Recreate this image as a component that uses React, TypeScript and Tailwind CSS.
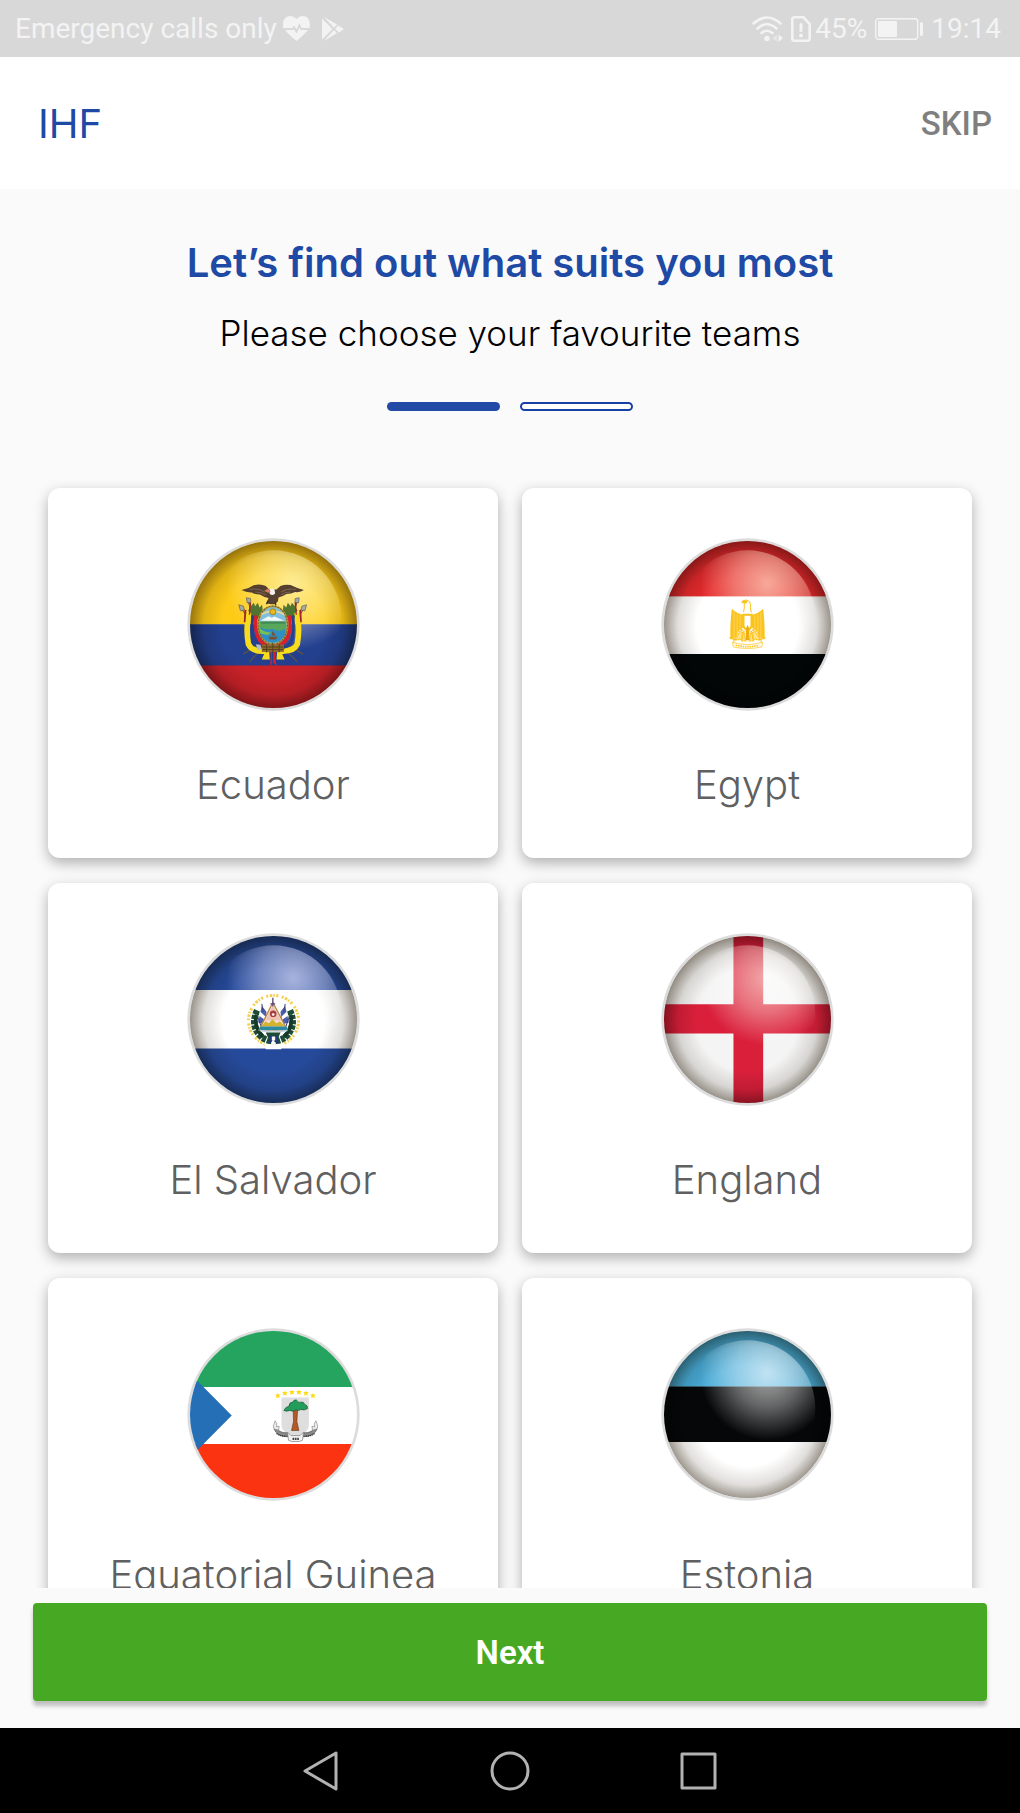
import React, { useState } from "react";

type FlagProps = {
  id: string;
  glossy?: boolean;
  gloss?: string;
  children: React.ReactNode;
  emblem?: React.ReactNode;
};

/* Round badge, drawn on a 518-unit square with its centre at (259, 259). */
function Badge({ id, glossy = true, gloss = "#fff", children, emblem }: FlagProps) {
  return (
    <svg viewBox="0 0 518 518" className="isolate size-[173px]" aria-hidden="true">
      <defs>
        <clipPath id={`${id}-clip`}>
          <circle cx="259" cy="259" r="250" />
        </clipPath>
        <radialGradient id={`${id}-shade`} gradientUnits="userSpaceOnUse" cx="259" cy="262" r="254">
          <stop offset="0.6" stopColor="#2a1c08" stopOpacity="0" />
          <stop offset="0.82" stopColor="#2a1c08" stopOpacity="0.14" />
          <stop offset="1" stopColor="#2a1c08" stopOpacity="0.5" />
        </radialGradient>
        <radialGradient id={`${id}-gloss`} gradientUnits="userSpaceOnUse" cx="318" cy="136" r="200">
          <stop offset="0" stopColor={gloss} stopOpacity="0.66" />
          <stop offset="0.5" stopColor={gloss} stopOpacity="0.38" />
          <stop offset="0.8" stopColor={gloss} stopOpacity="0.15" />
          <stop offset="1" stopColor={gloss} stopOpacity="0" />
        </radialGradient>
      </defs>
      <circle cx="259" cy="259" r="258" fill="#dcdcdc" />
      <g clipPath={`url(#${id}-clip)`}>
        {children}
        {glossy && (
          <>
            <circle className="mix-blend-multiply" cx="259" cy="259" r="251" fill={`url(#${id}-shade)`} />
            <circle className="mix-blend-screen" cx="259" cy="240" r="203" fill={`url(#${id}-gloss)`} />
          </>
        )}
        {emblem}
      </g>
    </svg>
  );
}

function EcuadorEmblem() {
  return (
    <g transform="translate(-52 -54)">
      {/* spears */}
      <g stroke="#6b5638" strokeWidth="3">
        <path d="M209 256 L232 290 M231 234 L248 280 M408 256 L386 290 M386 234 L370 280 M262 375 L220 402 M275 385 L240 424 M355 375 L400 402 M343 385 L382 424" />
      </g>
      <g fill="#a9a9a4" stroke="#5c5c58" strokeWidth="2">
        <path d="M207 254 l14 4 3 12 -12 2z M230 233 l12 2 1 12 -11 1z M410 254 l-14 4 -3 12 12 2z M388 233 l-12 2 -1 12 11 1z" />
      </g>
      {/* laurel */}
      <g fill="#4f7430">
        <path d="M243 258 l9 -10 4 10 8 -10 5 14 8 -8 2 20 -10 20 -18 6 -12 -12 6 -8 -10 -8z" />
        <path d="M375 258 l-9 -10 -4 10 -8 -10 -5 14 -8 -8 -2 20 10 20 18 6 12 -12 -6 -8 10 -8z" />
      </g>
      {/* draped flags */}
      <g fill="none">
        <path d="M236 280 Q228 330 236 372 Q246 396 290 392" stroke="#f6dc1c" strokeWidth="17" />
        <path d="M382 280 Q390 330 382 372 Q372 396 328 392" stroke="#f6dc1c" strokeWidth="17" />
        <path d="M249 286 Q244 336 254 364 Q264 384 292 382" stroke="#24408e" strokeWidth="9" />
        <path d="M369 286 Q374 336 364 364 Q354 384 326 382" stroke="#24408e" strokeWidth="9" />
        <path d="M259 286 Q254 330 266 354 Q276 374 296 374" stroke="#d9202b" strokeWidth="11" />
        <path d="M359 286 Q364 330 352 354 Q342 374 322 374" stroke="#d9202b" strokeWidth="11" />
      </g>
      <path d="M224 268 l6 2 -3 36 -5 0z M239 246 l5 2 -3 36 -4 0z M394 268 l-6 2 3 36 5 0z M379 246 l-5 2 3 36 4 0z" fill="#a3262c" />
      <path d="M284 398 l14 -4 2 24 -24 0z M322 394 l14 4 8 20 -24 0z" fill="#f6dc1c" />
      <path d="M302 392 h16 l-2 18 4 28 -11 -12 -8 12 2 -28z" fill="#d9202b" />
      <path d="M308 394 v40" stroke="#24408e" strokeWidth="4" />
      {/* oval shield */}
      <ellipse cx="309" cy="315" rx="47" ry="60" fill="#b5953c" />
      <ellipse cx="309" cy="315" rx="41" ry="54" fill="#7fbfe0" />
      <path d="M270 303 h78 l2 14 -3 26 -77 0 -2 -24z" fill="#58a85b" />
      <path d="M272 302 L296 288 l10 5 8 -4 30 13z" fill="#f4f7f8" />
      <path d="M274 306 h71 v4 h-71z" fill="#3b7e56" />
      <path d="M272 322 q18 10 36 4 q20 12 38 0 v18 q-14 24 -37 24 q-26 -2 -37 -26z" fill="#2f8fc0" />
      <path d="M270 324 q14 14 34 12 l-8 8 q-18 0 -25 -6z" fill="#79bf55" />
      <path d="M296 350 h27 l-5 8 h-18z M308 332 l10 14 h-12z" fill="#7c4e32" />
      <path d="M272 284 q37 -22 74 0" fill="none" stroke="#e2d89b" strokeWidth="5" />
      <circle cx="309" cy="275" r="9" fill="#e6b91e" stroke="#8b6a16" strokeWidth="2" />
      <ellipse cx="309" cy="315" rx="44" ry="57" fill="none" stroke="#705c28" strokeWidth="3" strokeDasharray="5 4" />
      {/* fasces */}
      <path d="M276 373 h66 v22 h-66z" fill="#8f6a2c" />
      <path d="M278 380 h62 M278 388 h62 M290 372 v24 M328 372 v24 M309 368 v30" stroke="#57401c" strokeWidth="3" />
      <path d="M258 372 l14 2 4 12 -12 4z" fill="#b7bcc0" />
      {/* condor */}
      <path d="M215 210 Q236 206 250 196 Q272 190 288 198 L298 208 L320 208 L332 198 Q346 192 362 195 Q384 206 402 210 Q392 218 376 216 Q364 222 350 222 Q338 230 326 232 L324 244 L314 252 L304 252 L290 250 L296 234 Q280 230 270 223 Q254 223 246 217 Q230 218 215 210Z" fill="#55402f" />
      <path d="M240 208 q26 -4 46 8 M378 208 q-26 -4 -44 8 M256 216 q18 0 32 8 M362 216 q-16 0 -28 8" fill="none" stroke="#7a6150" strokeWidth="3" />
      <path d="M298 208 q8 -6 16 0 l2 12 q-8 8 -16 2z" fill="#f2efec" />
      <path d="M284 212 q8 -8 16 -4 l2 8 -8 2z" fill="#d47d67" />
      <path d="M294 242 l-4 10 M316 246 l2 10" stroke="#3c2b22" strokeWidth="4" />
    </g>
  );
}

function EgyptEmblem() {
  return (
    <g transform="translate(-64 -54)">
      <path d="M276 266 Q270 318 272 358 L288 352 Q294 330 310 322 L314 284 Q292 282 276 266Z" fill="#fcc31a" />
      <path d="M370 266 Q376 318 374 358 L358 352 Q352 330 336 322 L332 284 Q354 282 370 266Z" fill="#fcc31a" />
      <path d="M283 276 v78 M292 282 v58 M301 284 v42 M363 276 v78 M354 282 v58 M345 284 v42" stroke="#fff" strokeOpacity="0.45" strokeWidth="2" />
      <path d="M311 276 Q315 264 313 248 Q309 246 306 247 Q310 239 320 240 Q332 242 332 256 Q330 270 336 276" fill="#fff" stroke="#fcc31a" strokeWidth="3" />
      <path d="M308 241 h16 l-4 9 h-8z" fill="#fcc31a" />
      <path d="M311 284 h24 v34 q-4 10 -12 12 q-8 -2 -12 -12z" fill="#fff" stroke="#fcc31a" strokeWidth="6" />
      <path d="M306 326 L284 358 h24z M340 326 L362 358 h-24z M312 332 l-8 30 h14z M334 332 l8 30 h-14z" fill="#fde28a" stroke="#fcc31a" strokeWidth="4" strokeDasharray="6 2" />
      <path d="M318 326 l5 -12 6 12 -1 34 h-10z" fill="#eeae12" />
      <path d="M268 352 l22 8 M378 352 l-22 8 M282 354 v22 M364 354 v22" stroke="#fcc31a" strokeWidth="3" />
      <path d="M278 366 Q323 380 368 366 L366 380 Q323 390 280 380Z" fill="#fffaf0" stroke="#fcc31a" strokeWidth="2" />
      <path d="M288 375 Q323 384 358 375" fill="none" stroke="#fcc31a" strokeWidth="5" strokeDasharray="4 3" />
    </g>
  );
}

function ElSalvadorEmblem() {
  return (
    <g transform="translate(-52 -54)">
      <circle cx="311" cy="316" r="75" fill="none" stroke="#f3cf52" strokeWidth="9" strokeDasharray="5 4 7 3 4 4 6 9" pathLength="420" />
      <path d="M282 380 Q311 396 340 380 L334 402 H288Z" fill="#fff" />
      {/* laurel wreath */}
      <path d="M262 286 Q242 330 270 360 Q288 378 304 376" fill="none" stroke="#1d4c34" strokeWidth="20" strokeDasharray="12 3" />
      <path d="M360 286 Q380 330 352 360 Q334 378 318 376" fill="none" stroke="#1d4c34" strokeWidth="20" strokeDasharray="12 3" />
      <path d="M260 298 Q250 334 280 366 M362 298 Q372 334 342 366" fill="none" stroke="#163a29" strokeWidth="11" />
      {/* flags */}
      <path d="M276 272 l14 18 -3 38 -22 -6z M346 272 l-14 18 3 38 22 -6z" fill="#4a5fae" />
      <path d="M270 288 l17 16 -2 10 -17 -12z M352 288 l-17 16 2 10 17 -12z" fill="#fff" />
      <path d="M276 266 l4 24 M346 266 l-4 24 M262 300 l12 34 M360 300 l-12 34" stroke="#3b4675" strokeWidth="3" />
      {/* triangle */}
      <path d="M309 262 L268 344 H352Z" fill="#f6e6da" stroke="#b9854a" strokeWidth="4" />
      <path d="M309 272 L285 316 H335Z" fill="#efc4b5" />
      <path d="M309 248 v26 M302 266 h14" stroke="#5a4b7c" strokeWidth="4" />
      <circle cx="310" cy="296" r="10" fill="#a8403f" />
      <circle cx="310" cy="298" r="4" fill="#fff" />
      <path d="M275 334 l12 -16 10 6 11 -12 12 12 10 -6 16 16z" fill="#d3b32f" />
      <path d="M272 334 h78 l5 11 H266z" fill="#2e8aa3" />
      <path d="M270 346 q40 8 82 0" fill="none" stroke="#c9d6dd" strokeWidth="4" />
      <path d="M288 352 h44 l-6 14 h-32z" fill="#1d4c34" />
      <path d="M296 362 h30 l-4 14 8 8 -14 -2 -6 -8 -6 8 -12 2 8 -8z" fill="#27397d" />
      <path d="M306 364 h10 v12 h-10z" fill="#fff" />
    </g>
  );
}

function GuineaEmblem() {
  return (
    <g transform="translate(-52 -54)">
      {[[324, 256], [345, 249], [366, 246], [387, 246], [408, 249], [429, 256]].map(([x, y]) => (
        <path
          key={x}
          d={`M${x} ${y - 8} l2 5 6 0 -4 5 2 6 -6 -3 -6 3 2 -6 -4 -5 6 0z`}
          fill="#fbdc12"
        />
      ))}
      <path d="M335 262 h82 v84 q0 22 -41 34 q-41 -12 -41 -34z" fill="#dedede" />
      <path d="M370 300 h13 l-2 34 6 27 h-22 l6 -27z" fill="#b35a27" stroke="#6f3b1d" strokeWidth="2" />
      <path d="M342 301 Q346 291 357 288 Q358 276 370 275 Q372 267 380 270 Q386 279 393 276 Q401 274 404 282 Q414 286 413 295 Q404 302 392 298 Q386 304 380 299 Q370 306 360 301 Q350 305 342 301Z" fill="#239e5a" stroke="#1d4f36" strokeWidth="2" />
      <path d="M313 358 Q322 378 354 380 L352 368 Q330 368 322 356Z M441 358 Q432 378 400 380 L402 368 Q424 368 432 356Z" fill="#8b8b8b" stroke="#555" strokeWidth="2" />
      <path d="M353 366 l10 10 h28 l10 -10 -3 24 -10 4 h-22 l-10 -4z" fill="#f3f3f3" stroke="#777" strokeWidth="2" />
      <path d="M368 386 h20" stroke="#444" strokeWidth="7" strokeDasharray="5 2" />
      <path d="M316 332 q8 8 4 18 l8 -2 -2 12 -14 -4 -1 -10z M438 332 q-8 8 -4 18 l-8 -2 2 12 14 -4 1 -10z" fill="#ececec" stroke="#888" strokeWidth="2" />
      <path d="M320 370 q14 9 30 8 M434 370 q-14 9 -30 8" fill="none" stroke="#333" strokeWidth="4" strokeDasharray="4 2" />
    </g>
  );
}

const teams: { name: string; flag: React.ReactNode }[] = [
  {
    name: "Ecuador",
    flag: (
      <Badge id="ec" gloss="#fff3cf" emblem={<EcuadorEmblem />}>
        <path fill="#fdcb16" d="M0 0h518v259H0z" />
        <path fill="#23408f" d="M0 258h518v125H0z" />
        <path fill="#cb2229" d="M0 382h518v136H0z" />
      </Badge>
    ),
  },
  {
    name: "Egypt",
    flag: (
      <Badge id="eg" gloss="#ffe6c8" emblem={<EgyptEmblem />}>
        <path fill="#e62a2d" d="M0 0h518v176H0z" />
        <path fill="#fff" d="M0 175h518v173H0z" />
        <path fill="#020607" d="M0 347h518v171H0z" />
      </Badge>
    ),
  },
  {
    name: "El Salvador",
    flag: (
      <Badge id="sv" gloss="#e6e0ff" emblem={<ElSalvadorEmblem />}>
        <path fill="#264a9b" d="M0 0h518v518H0z" />
        <path fill="#fff" d="M0 171h518v175H0z" />
      </Badge>
    ),
  },
  {
    name: "England",
    flag: (
      <Badge id="en" gloss="#fff0dc">
        <path fill="#f4f4f4" d="M0 0h518v518H0z" />
        <path fill="#da1f3b" d="M217 0h89v518h-89z M0 213h518v88H0z" />
      </Badge>
    ),
  },
  {
    name: "Equatorial Guinea",
    flag: (
      <Badge id="gq" glossy={false} emblem={<GuineaEmblem />}>
        <path fill="#25a45f" d="M0 0h518v178H0z" />
        <path fill="#fff" d="M0 177h518v171H0z" />
        <path fill="#fc3310" d="M0 347h518v171H0z" />
        <path fill="#246fb5" d="M0 127L134 262L0 397z" />
      </Badge>
    ),
  },
  {
    name: "Estonia",
    flag: (
      <Badge id="ee">
        <path fill="#48abd8" d="M0 0h518v176H0z" />
        <path fill="#050708" d="M0 175h518v167H0z" />
        <path fill="#fff" d="M0 341h518v177H0z" />
      </Badge>
    ),
  },
];

function StatusBar() {
  return (
    <div className="flex h-[57px] shrink-0 items-center justify-between bg-[#d8d8d8] px-[15px] text-[28px] leading-8 text-[#f3f3f3]">
      <div className="flex items-center gap-1.5">
        <span>Emergency calls only</span>
        <svg viewBox="0 0 27 25" className="h-[25px] w-[27px]" aria-hidden="true">
          <path fill="currentColor" d="M0 12 C-1 5 2 0 7.500 0 Q11 0 13.500 3 Q16 0 19.500 0 C25 0 28 5 26.500 12 L18.500 12 L16.500 7 L13.500 13.500 L11 9.500 L9.500 12Z M2 14 H10.500 L11 13 L13.500 17.500 L16.500 11.500 L17.500 14 H25 Q22 18 13.500 25 Q5 18 2 14Z" />
        </svg>
        <svg viewBox="0 0 22 24" className="ml-1.5 h-6 w-[22px]" aria-hidden="true">
          <path fill="currentColor" d="M0 1.500 L10.500 12 L0 22.500Z M2 0 L15 7.500 L12 10.800Z M2 24 L15 16 L12 13Z M16 8.500 L22 12 L17 15.500 L13.200 12Z" />
        </svg>
      </div>
      <div className="flex items-center gap-2 pr-1">
        <svg viewBox="0 0 31 26" className="h-[26px] w-[31px]" aria-hidden="true">
          <g fill="none" stroke="currentColor" strokeWidth="2.600" strokeLinecap="round">
            <path d="M1.500 7.500 Q15 -4.500 28.500 7.500 M5.500 12.500 Q15 4 24.500 12.500 M9.500 17 Q15 12.500 20.500 17" />
          </g>
          <circle cx="15" cy="22.500" r="2.700" fill="currentColor" />
          <path fill="currentColor" d="M26.500 18.500 V26 L31 22Z" />
          <path fill="currentColor" opacity="0.5" d="M25 18.500 V26 L20 22Z" />
        </svg>
        <div className="flex items-center gap-1">
          <svg viewBox="0 0 20 26" className="h-[26px] w-5" aria-hidden="true">
            <path d="M3 1.300 H12.500 L18.700 8 V22.500 Q18.700 24.700 16.500 24.700 H3.500 Q1.300 24.700 1.300 22.500 V3.500 Q1.300 1.300 3 1.300Z" fill="none" stroke="currentColor" strokeWidth="2.600" />
            <path d="M10 8.500 V14.500" stroke="currentColor" strokeWidth="3" strokeLinecap="round" />
            <circle cx="10" cy="19.500" r="2" fill="currentColor" />
          </svg>
          <span>45%</span>
        </div>
        <svg viewBox="0 0 48 22" className="h-[22px] w-12" aria-hidden="true">
          <rect x="0.700" y="0.700" width="42" height="20.600" rx="3" fill="none" stroke="currentColor" strokeWidth="1.400" />
          <rect x="3" y="3" width="19" height="16" rx="1" fill="currentColor" />
          <rect x="45" y="4" width="3" height="14" rx="1.500" fill="currentColor" />
        </svg>
        <span>19:14</span>
      </div>
    </div>
  );
}

export default function App() {
  const [chosen, setChosen] = useState<string[]>([]);
  const toggle = (name: string) =>
    setChosen((now) => (now.includes(name) ? now.filter((n) => n !== name) : [...now, name]));

  return (
    <div className="flex h-screen flex-col bg-[#fafafa] font-[Roboto,sans-serif]">
      <StatusBar />
      <header className="flex h-33 shrink-0 items-center justify-between bg-white pt-0.5 pr-7 pl-[38px]">
        <span className="font-[Inter,sans-serif] text-[40px] leading-12 text-[#1e4aa5]">IHF</span>
        <button type="button" className="text-[33px] leading-12 font-medium text-[#7f7f7f]">
          SKIP
        </button>
      </header>

      <main className="min-h-0 flex-1 overflow-y-auto px-12 pt-12 pb-6 font-[Inter,sans-serif] [scrollbar-width:none]">
        <h1 className="text-center text-[40px] leading-13 font-semibold text-[#1e4aa5]">
          Let’s find out what suits you most
        </h1>
        <p className="mt-5 text-center text-[35px] leading-12 font-light text-black">
          Please choose your favourite teams
        </p>
        <div className="mt-[45px] flex justify-center gap-5" aria-label="Step 1 of 2" role="img">
          <span className="h-[9px] w-[113px] rounded-full bg-[#2149a6]" />
          <span className="h-[9px] w-[113px] rounded-full border-2 border-[#1741a6] bg-white" />
        </div>

        <div className="mt-[77px] grid grid-cols-2 gap-x-6 gap-y-[25px]">
          {teams.map((team) => (
            <button
              key={team.name}
              type="button"
              aria-pressed={chosen.includes(team.name)}
              onClick={() => toggle(team.name)}
              className="flex flex-col items-center rounded-xl bg-white pt-[50px] pb-[49px] shadow-[0_5px_14px_rgba(0,0,0,0.3)]"
            >
              {team.flag}
              <span className="mt-[50px] text-[40px] leading-12 font-light text-[#606060]">{team.name}</span>
            </button>
          ))}
        </div>
      </main>

      <div className="shrink-0 px-[33px] pt-[15px] pb-[27px]">
        <button
          type="button"
          className="h-[98px] w-full rounded-sm bg-[#47a923] pt-0.5 text-[33px] leading-12 font-semibold text-white shadow-[0_5px_4px_rgba(0,0,0,0.24)]"
        >
          Next
        </button>
      </div>

      <nav className="flex h-[85px] shrink-0 items-center justify-center gap-[149px] bg-black text-[#b2b2b2]">
        <button type="button" aria-label="Back">
          <svg viewBox="0 0 40 42" className="h-[42px] w-10" fill="none" stroke="currentColor" strokeWidth="3" strokeLinejoin="round">
            <path d="M35 3 V39 L4 21Z" />
          </svg>
        </button>
        <button type="button" aria-label="Home">
          <svg viewBox="0 0 40 42" className="h-[42px] w-10" fill="none" stroke="currentColor" strokeWidth="3">
            <circle cx="20" cy="21" r="18" />
          </svg>
        </button>
        <button type="button" aria-label="Recent apps">
          <svg viewBox="0 0 40 42" className="h-[42px] w-10" fill="none" stroke="currentColor" strokeWidth="3" strokeLinejoin="round">
            <rect x="3" y="4" width="33" height="34" />
          </svg>
        </button>
      </nav>
    </div>
  );
}
